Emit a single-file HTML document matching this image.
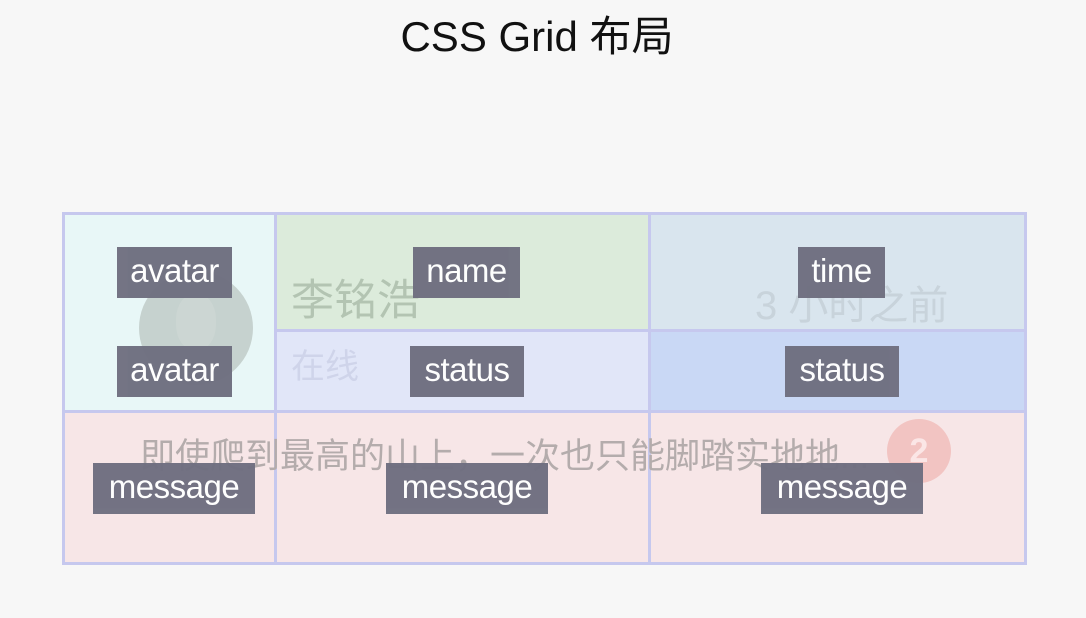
<!DOCTYPE html>
<html><head><meta charset="utf-8"><style>
body{margin:0;width:1086px;height:618px;background:#f7f7f7;font-family:"Liberation Sans","Noto Sans CJK SC",sans-serif;position:relative;overflow:hidden}
.a{position:absolute}
h1{position:absolute;left:-6px;width:1086px;top:3px;margin:0;text-align:center;font-weight:normal;font-size:42px;color:#111}
.c{position:absolute}
.l{position:absolute;background:#6f6f80;color:#fff;font-size:33px;letter-spacing:-0.5px;line-height:47px;text-align:center;height:51px;opacity:.97}
.bg{position:absolute;white-space:nowrap}
</style></head><body>
<h1>CSS Grid 布局</h1>
<div class="a" style="left:62px;top:212px;width:965px;height:353px;background:#c6c8ee"></div>
<div class="c" style="left:65px;top:215px;width:209px;height:195px;background:#e8f7f7"></div>
<div class="c" style="left:277px;top:215px;width:371px;height:114px;background:#dcebdb"></div>
<div class="c" style="left:651px;top:215px;width:373px;height:114px;background:#d9e5ee"></div>
<div class="c" style="left:277px;top:332px;width:371px;height:78px;background:#e1e6f8"></div>
<div class="c" style="left:651px;top:332px;width:373px;height:78px;background:#c9d8f5"></div>
<div class="c" style="left:65px;top:413px;width:209px;height:149px;background:#f7e6e7"></div>
<div class="c" style="left:277px;top:413px;width:371px;height:149px;background:#f7e6e7"></div>
<div class="c" style="left:651px;top:413px;width:373px;height:149px;background:#f7e6e7"></div>
<div class="a" style="left:139px;top:271px;width:114px;height:114px;border-radius:50%;background:#c6d2cf"></div>
<div class="a" style="left:176px;top:294px;width:40px;height:56px;border-radius:45%;background:#ccd6d3"></div>
<div class="bg" style="left:291px;top:266px;font-size:43px;color:#b3c4b2">李铭浩</div>
<div class="bg" style="left:291px;top:339px;font-size:34px;color:#cfd4ea">在线</div>
<div class="bg" style="left:755px;top:273px;font-size:40px;color:#c8d3db">3 小时之前</div>
<div class="bg" style="left:140px;top:428px;font-size:35px;color:#b4acac">即使爬到最高的山上，一次也只能脚踏实地地...</div>
<div class="a" style="left:887px;top:419px;width:64px;height:64px;border-radius:50%;background:#f2c4c2;color:#fbe6e6;font-size:34px;font-weight:bold;line-height:64px;text-align:center">2</div>
<div class="l" style="left:117px;top:247px;width:115px">avatar</div>
<div class="l" style="left:413px;top:247px;width:107px">name</div>
<div class="l" style="left:798px;top:247px;width:87px">time</div>
<div class="l" style="left:117px;top:346px;width:115px">avatar</div>
<div class="l" style="left:410px;top:346px;width:114px">status</div>
<div class="l" style="left:785px;top:346px;width:114px">status</div>
<div class="l" style="left:93px;top:463px;width:162px">message</div>
<div class="l" style="left:386px;top:463px;width:162px">message</div>
<div class="l" style="left:761px;top:463px;width:162px">message</div>
</body></html>
